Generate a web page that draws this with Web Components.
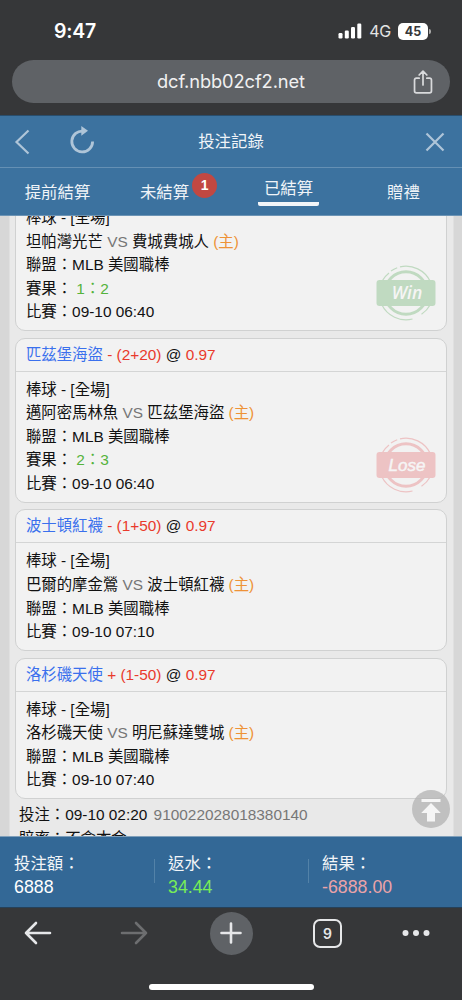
<!DOCTYPE html>
<html lang="zh-Hant">
<head>
<meta charset="utf-8">
<meta name="viewport" content="width=device-width, initial-scale=1">
<title>投注記錄</title>
<style>
  html, body {
    margin: 0;
    height: 100%;
    overflow: hidden;
  }
  body {
    font-family: "Liberation Sans", "Noto Sans CJK TC", sans-serif;
    background: #363739;
  }
</style>
</head>
<body>
<bet-app></bet-app>

<script>
// attaches an open shadow root filled with the given markup
function define(name, html, setup) {
  const template = document.createElement("template");
  template.innerHTML = html;
  customElements.define(
    name,
    class extends HTMLElement {
      constructor() {
        super();
        this.attachShadow({ mode: "open" });
        this.shadowRoot.appendChild(template.content.cloneNode(true));
      }
      connectedCallback() {
        if (setup) setup(this, this.shadowRoot);
      }
    }
  );
}

define("status-bar", `
  <style>
    :host {
      display: flex;
      align-items: center;
      justify-content: space-between;
      box-sizing: border-box;
      height: 60px;
      padding: 2px 31px 0 54px;
      color: #fff;
      font-family: Inter, sans-serif;
    }
    .time { font-size: 19.5px; font-weight: 600; letter-spacing: -0.2px; }
    .right { display: flex; align-items: center; }
    .net { font-size: 16px; margin: 0 7px 0 7px; color: #e4e4e4; letter-spacing: -0.2px; }
    .battery {
      width: 30px;
      height: 17px;
      border-radius: 5px;
      background: #fff;
      color: #363739;
      font-size: 12.5px;
      font-weight: 700;
      line-height: 17px;
      text-align: center;
    }
    .cap { width: 2px; height: 5px; margin-left: 1px; border-radius: 0 2px 2px 0; background: #aaa; }
  </style>
  <span class="time">9:47</span>
  <div class="right">
    <svg width="24" height="16" viewBox="0 0 24 16" fill="#fff">
      <rect x="0.5" y="10" width="4" height="5.5" rx="1.2"/>
      <rect x="6.8" y="7.5" width="4" height="8" rx="1.2"/>
      <rect x="13" y="4" width="4" height="11.5" rx="1.2"/>
      <rect x="19.3" y="0.5" width="4" height="15" rx="1.2"/>
    </svg>
    <span class="net">4G</span>
    <span class="battery">45</span><span class="cap"></span>
  </div>
`);

define("address-bar", `
  <style>
    :host {
      display: grid;
      grid-template-columns: 40px 1fr 40px;
      align-items: center;
      height: 43px;
      margin: 0 12px 12px;
      border-radius: 22px;
      background: #5f6266;
      color: #f0f0f1;
      font-family: Inter, sans-serif;
      font-size: 18.3px;
      text-align: center;
    }
    .url { grid-column: 2; padding-bottom: 2px; letter-spacing: -0.1px; }
    svg { display: block; margin-left: 2.5px; margin-top: 1.5px; }
  </style>
  <span class="url"><slot></slot></span>
  <svg width="20" height="25" viewBox="0 0 20 26" fill="none" stroke="#d9dadc" stroke-width="1.8" stroke-linecap="round" stroke-linejoin="round">
    <path d="M6 8.5H3.2Q1.2 8.5 1.2 10.5V21.8Q1.2 23.8 3.2 23.8H16.8Q18.8 23.8 18.8 21.8V10.5Q18.8 8.5 16.8 8.5H14M10 15.5V1.5M6 5.2L10 1.2L14 5.2"/>
  </svg>
`);

define("page-header", `
  <style>
    :host {
      display: grid;
      grid-template-columns: 1fr auto 1fr;
      align-items: center;
      box-sizing: border-box;
      height: 53px;
      padding: 0 17px 0 14px;
      border-top: 1px solid #294e6d;
      border-bottom: 1px solid #6590b4;
      color: #f0f4f8;
      font-size: 16.4px;
    }
    .left { display: flex; align-items: center; gap: 38px; }
    .title { padding: 0 0 2px 3px; line-height: 20px; }
    .close { justify-self: end; }
    svg { display: block; fill: none; stroke: #afc5d8; stroke-width: 2.2; }
    .reload { margin-top: -4px; }
  </style>
  <div class="left">
    <svg width="17" height="26" viewBox="0 0 17 26"><path d="M14.5 1.5L2.5 13L14.5 24.5"/></svg>
    <svg class="reload" width="26" height="28" viewBox="0 0 26 28">
      <path d="M14.5 5.2A10.4 10.4 0 1 0 23.6 15.4" stroke-width="2.8"/>
      <path d="M12.3 0V9.8L19 4.7Z" fill="#afc5d8" stroke="none"/>
    </svg>
  </div>
  <span class="title"><slot></slot></span>
  <svg class="close" width="20" height="20" viewBox="0 0 20 20"><path d="M1.5 1.5L18.5 18.5M18.5 1.5L1.5 18.5"/></svg>
`);

define("tab-item", `
  <style>
    :host {
      display: flex;
      justify-content: center;
      align-items: center;
      font-size: 16.4px;
      line-height: 20px;
      color: #f0f4f8;
    }
    .label { position: relative; }
    :host([active]) .label {
      padding: 0 6px 4px;
      border-bottom: 4px solid #f2f5f8;
      border-radius: 2px;
      margin-top: 1px;
    }
    .badge {
      position: absolute;
      left: 100%;
      top: -9px;
      margin-left: 3px;
      width: 25px;
      height: 25px;
      border-radius: 50%;
      background: #c14842;
      color: #fff;
      font-size: 14px;
      font-weight: 700;
      line-height: 25px;
      text-align: center;
    }
    .badge:empty { display: none; }
  </style>
  <span class="label"><slot></slot><span class="badge"></span></span>
`, (el, root) => {
  root.querySelector(".badge").textContent = el.getAttribute("badge") || "";
});

define("tab-bar", `
  <style>
    :host {
      display: grid;
      grid-template-columns: 115px 99px 149px 1fr;
      height: 47px;
      border-bottom: 1px solid #6c94b5;
    }
    ::slotted(:nth-child(4)) { padding-right: 18px; }
  </style>
  <slot></slot>
`);

define("result-stamp", `
  <style>
    :host { display: block; width: 60px; height: 56px; color: #c0dac1; }
    :host([lose]) { color: #edc3c4; }
    svg { display: block; }
    text {
      font: italic 600 17.5px "Open Sans", sans-serif;
      fill: #f6f5f5;
      stroke: none;
    }
    :host([lose]) text {
      font: italic 400 17px "Liberation Sans", sans-serif;
      stroke: #f6f5f5;
      stroke-width: 0.5;
    }
  </style>
  <svg width="60" height="56" viewBox="0 0 60 56" fill="none" stroke="currentColor">
    <circle cx="30" cy="28" r="21.2" stroke-width="3"/>
    <path d="M24 1.8A27 27 0 0 1 54.3 16.5M15 6A27 27 0 0 1 21.2 2.7M6.3 15.8A27 27 0 0 1 13 8M5.7 39.5A27 27 0 0 0 36.5 54M54.4 39.5A27 27 0 0 1 45.5 49.2" stroke-width="1.2"/>
    <rect x="0.5" y="15" width="59" height="26" rx="3" fill="currentColor" stroke="none"/>
    <text x="31" y="34.3" text-anchor="middle"></text>
  </svg>
`, (el, root) => {
  root.querySelector("text").textContent = el.hasAttribute("lose") ? "Lose" : "Win";
});

define("bet-card", `
  <style>
    :host {
      display: block;
      position: relative;
      border: 1.5px solid #d0d1d1;
      border-radius: 10px;
      background: #f2f2f2;
      font-size: 15.4px;
      line-height: 23.6px;
      white-space: nowrap;
      color: #111;
    }
    header {
      box-sizing: border-box;
      height: 33px;
      padding: 4px 9.5px 0;
      border-bottom: 1.5px solid #d4d5d5;
    }
    .body { padding: 6px 9.5px 6px; }
    .team { color: #3a70ed; }
    .odds { color: #e93a2c; }
    .vs { color: #767676; }
    .home { color: #ee9237; }
    .score { color: #55b33c; }
    result-stamp { position: absolute; right: 10px; bottom: 8.5px; }
  </style>
  <header>
    <span class="team"></span> <span class="odds line"></span> @ <span class="odds rate"></span>
  </header>
  <div class="body">
    <div>棒球 - [全場]</div>
    <div><span class="away"></span> <span class="vs">VS</span> <span class="host"></span> <span class="home">(主)</span></div>
    <div>聯盟：MLB 美國職棒</div>
    <div class="result">賽果： <span class="score"></span></div>
    <div>比賽：<span class="date"></span></div>
  </div>
`, (el, root) => {
  const $ = (s) => root.querySelector(s);
  const { pick, line, away, home, score, date, result } = el.dataset;
  if (pick) {
    $(".team").textContent = pick;
    $(".line").textContent = line;
    $(".rate").textContent = "0.97";
  } else {
    $("header").remove();
  }
  $(".away").textContent = away;
  $(".host").textContent = home;
  $(".date").textContent = date;
  if (score) {
    $(".score").textContent = score;
  } else {
    $(".result").remove();
  }
  if (result) {
    const stamp = document.createElement("result-stamp");
    if (result === "lose") stamp.setAttribute("lose", "");
    root.appendChild(stamp);
  }
});

define("bet-list", `
  <style>
    :host {
      display: block;
      position: relative;
      height: 620px;
      overflow: hidden;
      background: #d7d7d7;
    }
    .sheet {
      display: flow-root;
      box-sizing: border-box;
      height: 100%;
      margin: 0 8.5px;
      padding: 0 5.9px;
      border: solid #e0e0e0;
      border-width: 0 1px;
      background: #e9e9e9;
    }
    .cards {
      display: flex;
      flex-direction: column;
      gap: 6.8px;
      margin-top: -17.1px;
    }
    .info {
      padding: 4px 3.6px 0;
      font-size: 15.4px;
      line-height: 23.6px;
      white-space: nowrap;
      color: #111;
    }
    .id { color: #777; margin-left: 2px; }
    .top { position: absolute; right: 12px; bottom: 8px; }
  </style>
  <div class="sheet">
    <div class="cards"><slot></slot></div>
    <div class="info">
      <div>投注：09-10 02:20 <span class="id">910022028018380140</span></div>
      <div>賠率：不含本金</div>
    </div>
  </div>
  <svg class="top" width="38" height="38" viewBox="0 0 38 38">
    <circle cx="19" cy="19" r="19" fill="#b5b5b5" fill-opacity=".8"/>
    <path d="M9.5 9H28.5V12H9.5ZM19 13L28.8 23H23V31.5H15V23H9.2Z" fill="#f5f5f5"/>
  </svg>
`);

define("summary-item", `
  <style>
    :host { display: block; font-size: 16.4px; line-height: 24px; color: #f2f5f8; }
    .value { font-size: 17.8px; color: var(--value-color, #fff); }
  </style>
  <div><slot name="label"></slot></div>
  <div class="value"><slot></slot></div>
`);

define("summary-bar", `
  <style>
    :host {
      display: grid;
      grid-template-columns: 154px 154px 1fr;
      align-items: center;
      box-sizing: border-box;
      height: 72px;
      padding-top: 5px;
      border-top: 1px solid #7f9fba;
      border-bottom: 1px solid #25415a;
      background: #336896;
    }
    ::slotted(*) { padding-left: 14px; }
    ::slotted(:not(:first-child)) {
      background: linear-gradient(#5382a8, #5382a8) left 8px / 1px 24px no-repeat;
    }
  </style>
  <slot></slot>
`);

define("browser-toolbar", `
  <style>
    :host {
      display: flex;
      flex-direction: column;
      align-items: center;
      height: 92px;
      background: #363739;
    }
    .buttons {
      display: flex;
      align-items: center;
      box-sizing: border-box;
      width: 100%;
      height: 50px;
      padding-left: 24px;
    }
    svg { display: block; fill: none; stroke: #e6e7e9; stroke-width: 2.6; stroke-linecap: round; stroke-linejoin: round; }
    .forward { margin-left: 68px; stroke: #6d6e70; }
    .plus { display: grid; place-items: center; width: 43px; height: 43px; margin-left: 61.5px; border-radius: 50%; background: #5f6266; }
    .tabs {
      box-sizing: border-box;
      width: 29px;
      height: 29px;
      margin: 1px 60px 0 60.5px;
      border: 2.5px solid #e6e7e9;
      border-radius: 7px;
      color: #e6e7e9;
      font: 600 14px/25px Inter, sans-serif;
      text-align: center;
    }
    .dots { fill: #e6e7e9; stroke: none; }
    .home { width: 165px; height: 6px; margin-top: 26px; border-radius: 3px; background: #fff; }
  </style>
  <div class="buttons">
    <svg width="28" height="24" viewBox="0 0 28 24"><path d="M12 2L2 12L12 22M2 12H26"/></svg>
    <svg class="forward" width="28" height="24" viewBox="0 0 28 24"><path d="M16 2L26 12L16 22M26 12H2"/></svg>
    <span class="plus"><svg width="22" height="22" viewBox="0 0 22 22"><path d="M11 1.5V20.5M1.5 11H20.5"/></svg></span>
    <span class="tabs">9</span>
    <svg class="dots" width="28" height="8" viewBox="0 0 28 8"><circle cx="3.5" cy="4" r="3"/><circle cx="14" cy="4" r="3"/><circle cx="24.5" cy="4" r="3"/></svg>
  </div>
  <div class="home"></div>
`);

define("bet-app", `
  <style>
    :host { display: flex; flex-direction: column; width: 462px; height: 1000px; }
    .top { background: #3c729f; }
  </style>
  <status-bar></status-bar>
  <address-bar>dcf.nbb02cf2.net</address-bar>
  <div class="top">
    <page-header>投注記錄</page-header>
    <tab-bar>
      <tab-item>提前結算</tab-item>
      <tab-item badge="1">未結算</tab-item>
      <tab-item active>已結算</tab-item>
      <tab-item>贈禮</tab-item>
    </tab-bar>
  </div>
  <bet-list>
    <bet-card data-away="坦帕灣光芒" data-home="費城費城人" data-score="1：2" data-date="09-10 06:40" data-result="win"></bet-card>
    <bet-card data-pick="匹茲堡海盜" data-line="- (2+20)" data-away="邁阿密馬林魚" data-home="匹茲堡海盜" data-score="2：3" data-date="09-10 06:40" data-result="lose"></bet-card>
    <bet-card data-pick="波士頓紅襪" data-line="- (1+50)" data-away="巴爾的摩金鶯" data-home="波士頓紅襪" data-date="09-10 07:10"></bet-card>
    <bet-card data-pick="洛杉磯天使" data-line="+ (1-50)" data-away="洛杉磯天使" data-home="明尼蘇達雙城" data-date="09-10 07:40"></bet-card>
  </bet-list>
  <summary-bar>
    <summary-item><span slot="label">投注額：</span>6888</summary-item>
    <summary-item style="--value-color:#78ed56"><span slot="label">返水：</span>34.44</summary-item>
    <summary-item style="--value-color:#eba3a8"><span slot="label">結果：</span>-6888.00</summary-item>
  </summary-bar>
  <browser-toolbar></browser-toolbar>
`);
</script>
</body>
</html>
